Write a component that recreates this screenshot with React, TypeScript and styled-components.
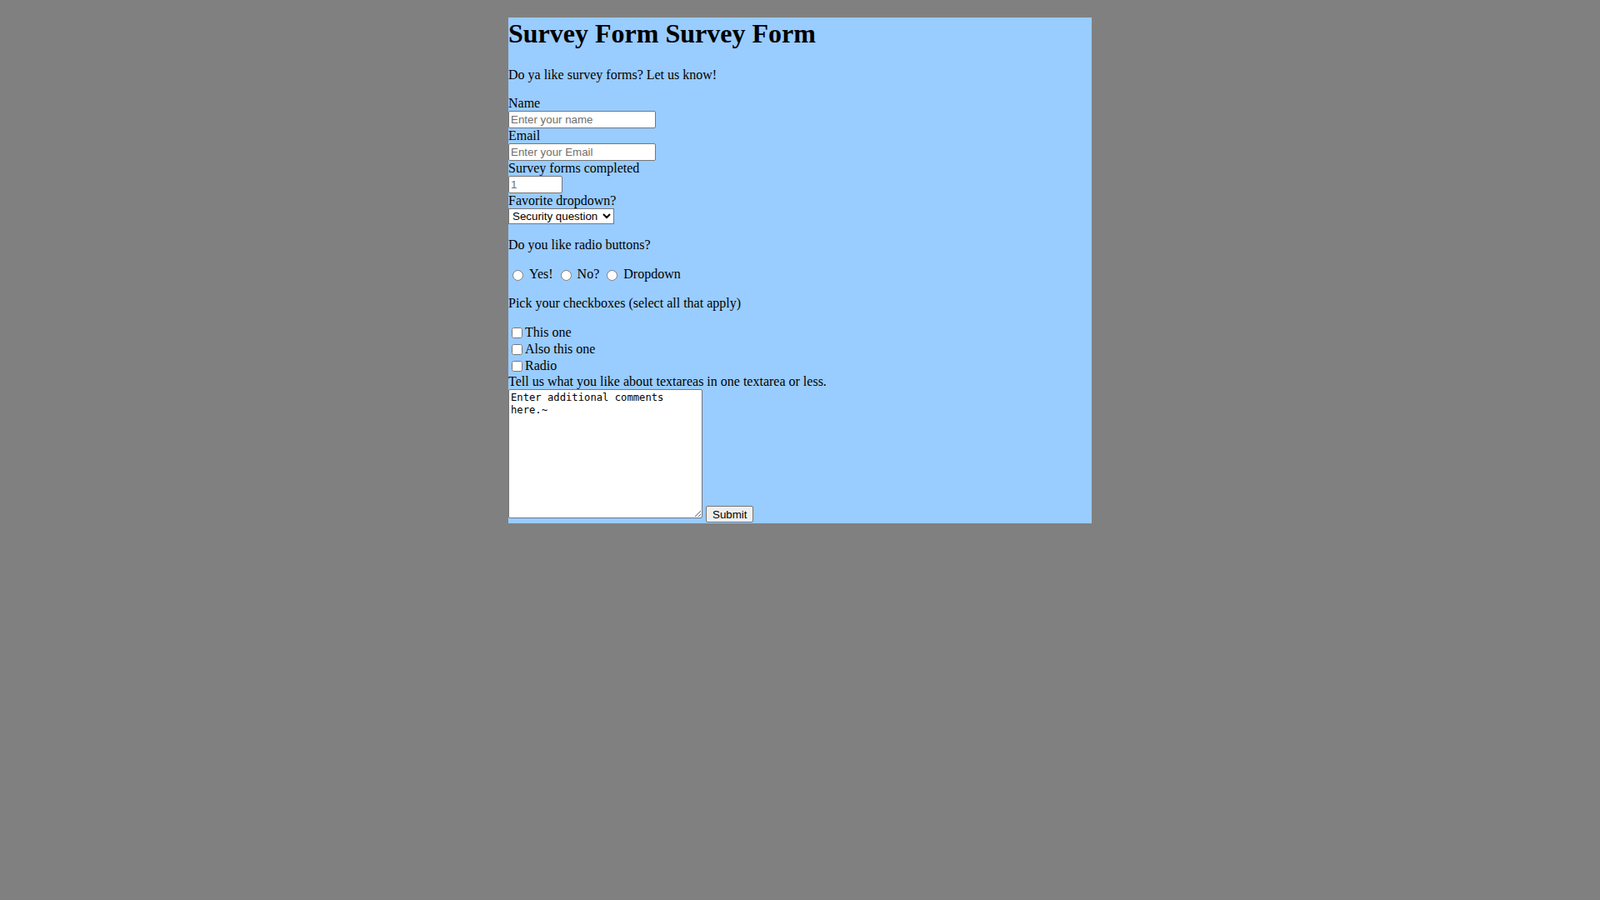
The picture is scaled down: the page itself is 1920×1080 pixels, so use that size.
import React from 'react';
import styled, { createGlobalStyle } from 'styled-components';

const GlobalStyle = createGlobalStyle`
  html,
  body {
    background: #808080;
  }

  body {
    margin: 0;
    padding: 0 8px;
    font-family: 'Liberation Serif', 'Times New Roman', serif;
    font-size: 16px;
    color: #000;
  }
`;

const Container = styled.main`
  width: 700px;
  margin: 21px auto 8px;
  background: #99ccff;
`;

const Title = styled.h1`
  margin: 0 0 22px;
  padding-top: 1px;
  font-size: 32px;
  line-height: 37px;
  font-weight: bold;
`;

const Description = styled.p`
  margin: 16px 0;
`;

const Form = styled.form`
  margin: 0;
`;

const FieldLabel = styled.label`
  display: block;
`;

const TextInput = styled.input<{ $width?: number }>`
  display: block;
  box-sizing: border-box;
  width: ${({ $width }) => $width ?? 177}px;
  height: 21px;
  margin: 0;
  padding: 1px 2px;
  border: 1px solid #767676;
  border-radius: 2px;
  background: #fff;
  font-family: 'Liberation Sans', Arial, sans-serif;
  font-size: 13.33px;
  color: #000;

  &::placeholder {
    color: #6f6f6f;
  }
`;

const Dropdown = styled.select`
  display: block;
  box-sizing: border-box;
  width: 127px;
  height: 19px;
  margin: 0;
  border: 1px solid #767676;
  border-radius: 0;
  background: #fff;
  font-family: 'Liberation Sans', Arial, sans-serif;
  font-size: 13.33px;
  color: #000;
`;

const Question = styled.p`
  margin: 16px 0;
`;

const ChoiceRow = styled.div`
  display: flex;
  align-items: center;
  height: 20px;
`;

const Radio = styled.input.attrs({ type: 'radio' })`
  width: 13px;
  height: 13px;
  margin: 3px 3px 0 5px;
`;

const RadioText = styled.span`
  margin: 0 4px;
`;

const CheckBox = styled.input.attrs({ type: 'checkbox' })`
  width: 13px;
  height: 13px;
  margin: 3px 3px 3px 4px;
`;

const SubmitRow = styled.div`
  display: flex;
  align-items: flex-end;
`;

const Comments = styled.textarea`
  box-sizing: border-box;
  width: 233px;
  height: 155px;
  margin: 0 0 6px 0;
  padding: 2px;
  border: 1px solid #767676;
  border-radius: 2px;
  background: #fff;
  font-family: 'DejaVu Sans Mono', 'Liberation Mono', monospace;
  font-size: 12.2px;
  line-height: 15px;
  color: #000;
`;

const SubmitButton = styled.button`
  box-sizing: border-box;
  height: 20px;
  margin: 0 0 1px 4px;
  padding: 1px 7px;
  border: 1px solid #767676;
  border-radius: 2px;
  background: #efefef;
  font-family: 'Liberation Sans', Arial, sans-serif;
  font-size: 13.33px;
  color: #000;
`;

const radios = ['Yes!', 'No?', 'Dropdown'];
const checks = ['This one', 'Also this one', 'Radio'];

export default function App() {
  return (
    <>
      <GlobalStyle />
      <Container>
        <Title>Survey Form Survey Form</Title>
        <Description>Do ya like survey forms? Let us know!</Description>
        <Form onSubmit={(e) => e.preventDefault()}>
          <FieldLabel htmlFor="name">Name</FieldLabel>
          <TextInput id="name" type="text" placeholder="Enter your name" />
          <FieldLabel htmlFor="email">Email</FieldLabel>
          <TextInput id="email" type="email" placeholder="Enter your Email" />
          <FieldLabel htmlFor="number">Survey forms completed</FieldLabel>
          <TextInput id="number" type="number" placeholder="1" $width={65} />
          <FieldLabel htmlFor="dropdown">Favorite dropdown?</FieldLabel>
          <Dropdown id="dropdown" defaultValue="security">
            <option value="security">Security question</option>
            <option value="country">Country</option>
            <option value="state">State</option>
          </Dropdown>

          <Question>Do you like radio buttons?</Question>
          <ChoiceRow>
            {radios.map((r) => (
              <React.Fragment key={r}>
                <Radio name="radio" value={r} />
                <RadioText>{r}</RadioText>
              </React.Fragment>
            ))}
          </ChoiceRow>

          <Question>Pick your checkboxes (select all that apply)</Question>
          {checks.map((c) => (
            <ChoiceRow key={c}>
              <CheckBox value={c} />
              <span>{c}</span>
            </ChoiceRow>
          ))}

          <FieldLabel htmlFor="comments">
            Tell us what you like about textareas in one textarea or less.
          </FieldLabel>
          <SubmitRow>
            <Comments id="comments" defaultValue="Enter additional comments here.~" />
            <SubmitButton type="submit">Submit</SubmitButton>
          </SubmitRow>
        </Form>
      </Container>
    </>
  );
}
